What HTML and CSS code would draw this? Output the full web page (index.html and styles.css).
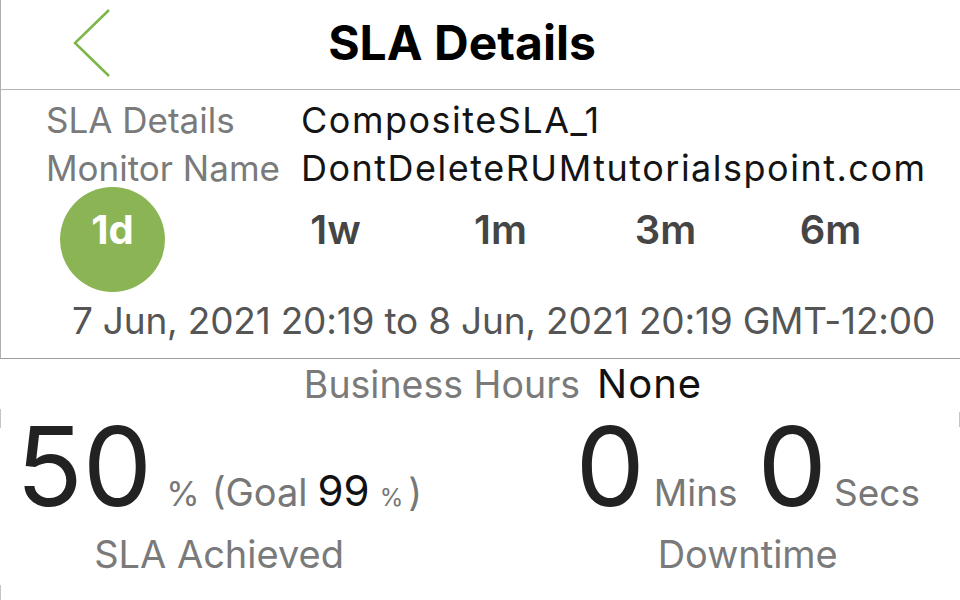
FILE: index.html
```html
<!DOCTYPE html>
<html lang="en">
<head>
<meta charset="utf-8">
<title>SLA Details</title>
<link rel="stylesheet" href="styles.css">
</head>
<body>
<div class="screen">
  <header class="topbar">
    <button class="back" aria-label="Back">
      <svg width="38" height="70" viewBox="0 0 38 70"><polyline points="36,2 2,35 36,68" fill="none" stroke="#7cb548" stroke-width="2.5"/></svg>
    </button>
    <h1 class="title">SLA Details</h1>
  </header>
  <section class="info">
    <div class="row"><span class="label">SLA Details</span><span class="value">CompositeSLA_1</span></div>
    <div class="row"><span class="label">Monitor Name</span><span class="value">DontDeleteRUMtutorialspoint.com</span></div>
    <div class="periods">
      <span class="period active">1d</span>
      <span class="period">1w</span>
      <span class="period">1m</span>
      <span class="period">3m</span>
      <span class="period">6m</span>
    </div>
    <div class="range">7 Jun, 2021 20:19 to 8 Jun, 2021 20:19 GMT-12:00</div>
  </section>
  <section class="summary">
    <div class="hours"><span class="hours-label">Business Hours</span><span class="hours-value">None</span></div>
    <div class="stats">
      <div class="stat">
        <div class="stat-line">
          <span class="big">50</span><span class="unit pct">%</span><span class="goal">(Goal</span><span class="goal-num">99</span><span class="goal-pct">%</span><span class="goal-close">)</span>
        </div>
        <div class="caption">SLA Achieved</div>
      </div>
      <div class="stat">
        <div class="stat-line">
          <span class="big">0</span><span class="unit mins">Mins</span><span class="big second">0</span><span class="unit secs">Secs</span>
        </div>
        <div class="caption">Downtime</div>
      </div>
    </div>
  </section>
</div>
</body>
</html>
```
FILE: styles.css
```css
* { box-sizing: border-box; margin: 0; padding: 0; }
html, body { background: #fff; }
body {
  font-family: Inter, "Liberation Sans", sans-serif;
  width: 960px;
  height: 600px;
  overflow: hidden;
}
.screen { width: 960px; }

.topbar {
  display: flex;
  align-items: flex-start;
  height: 90px;
  padding-left: 72px;
  padding-right: 147px;
  border-left: 1px solid #b0b0b0;
  border-bottom: 1px solid #b5b5b5;
}
.back {
  border: 0;
  background: none;
  width: 38px;
  height: 70px;
  margin-top: 8px;
  display: block;
}
.back svg { display: block; }
.title {
  flex: 1;
  text-align: center;
  font-size: 48px;
  font-weight: 700;
  line-height: 86px;
  color: #000;
}

.info {
  border-left: 1px solid #b0b0b0;
  border-bottom: 1px solid #9e9e9e;
  padding-top: 6px;
  padding-bottom: 15px;
}
.row {
  display: flex;
  align-items: baseline;
  height: 48px;
  line-height: 48px;
  padding-left: 45px;
}
.label {
  width: 255px;
  flex-shrink: 0;
  font-size: 35px;
  color: #7a7a7a;
}
.value {
  font-size: 36px;
  color: #141414;
  letter-spacing: 1.5px;
}

.periods {
  display: flex;
  margin-top: -5px;
  padding-left: 59px;
  height: 105px;
}
.period {
  width: 165px;
  height: 105px;
  padding-top: 19px;
  text-align: center;
  font-size: 40px;
  font-weight: 600;
  line-height: 47px;
  color: #454545;
}
.period.active {
  width: 105px;
  border-radius: 50%;
  background: #8bb554;
  color: #fff;
  font-weight: 700;
  margin-right: 88px;
}

.range {
  margin-top: 7px;
  padding-left: 46px;
  text-align: center;
  font-size: 37px;
  line-height: 44px;
  color: #555;
  letter-spacing: -0.2px;
}

.summary { position: relative; height: 243px; }
.summary::before {
  content: "";
  position: absolute;
  left: 0;
  top: 45px;
  width: 1px;
  height: 198px;
  background: linear-gradient(#c4c4c4 0, #c4c4c4 19px, transparent 19px, transparent 176px, #c4c4c4 176px);
}
.summary::after {
  content: "";
  position: absolute;
  right: 0;
  top: 48px;
  width: 1px;
  height: 15px;
  background: #c4c4c4;
}
.hours {
  display: flex;
  justify-content: center;
  align-items: baseline;
  gap: 17px;
  padding-left: 46px;
  margin-top: 5px;
  height: 40px;
  line-height: 40px;
}
.hours-label { font-size: 37.5px; color: #7a7a7a; }
.hours-value { font-size: 40px; color: #111; letter-spacing: 1px; }

.stats {
  display: flex;
  justify-content: space-between;
  padding-left: 16px;
  padding-right: 40px;
  margin-top: 7px;
}
.stat {
  display: flex;
  flex-direction: column;
  align-items: center;
}
.stat-line {
  display: flex;
  align-items: baseline;
  height: 110px;
}
.stat-line span { line-height: normal; }
.stat-line .big { line-height: 110px; }
.big {
  font-size: 110px;
  font-weight: 400;
  color: #222;
}
.big.second { margin-left: 20px; }
.unit { color: #777; }
.pct { font-size: 34px; margin-left: 14px; }
.goal { font-size: 38px; color: #777; margin-left: 12px; }
.goal-num { font-size: 42px; color: #111; margin-left: 10px; }
.goal-pct { font-size: 24px; color: #777; margin-left: 10px; }
.goal-close { font-size: 38px; color: #777; margin-left: 5px; }
.mins { font-size: 37px; margin-left: 9px; }
.secs { font-size: 37px; margin-left: 7px; }
.caption {
  margin-top: 11px;
  font-size: 38px;
  line-height: 44px;
  color: #7a7a7a;
}
```
